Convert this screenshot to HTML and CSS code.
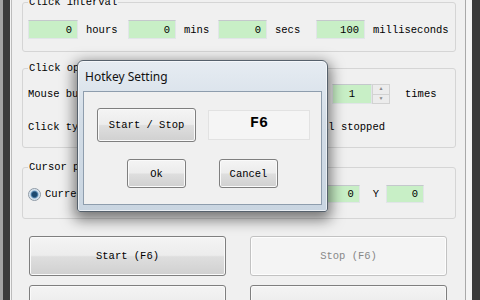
FILE: index.html
```html
<!DOCTYPE html>
<html lang="en">
<head>
  <meta charset="UTF-8" />
  <meta name="viewport" content="width=device-width, initial-scale=1.0" />
  <title>Auto Clicker - Hotkey Setting</title>
  <link rel="stylesheet" href="styles.css">
</head>
<body>
  <div class="desk">
    <div class="window">
      <div class="client">
        <fieldset class="group interval">
          <legend>Click interval</legend>
          <div class="interval-row">
            <input class="num" value="0" readonly><span class="unit">hours</span>
            <input class="num" value="0" readonly><span class="unit">mins</span>
            <input class="num" value="0" readonly><span class="unit">secs</span>
            <input class="num" value="100" readonly><span class="unit">milliseconds</span>
          </div>
        </fieldset>

        <div class="group-pair">
          <fieldset class="group options">
            <legend>Click options</legend>
            <div class="row">
              <span>Mouse button:</span>
              <span class="combo">Left</span>
            </div>
            <div class="row">
              <span>Click type:</span>
              <span class="combo">Single</span>
            </div>
          </fieldset>
          <fieldset class="group repeat">
            <legend>Click repeat</legend>
            <div class="row repeat-row">
              <label class="radio"><i></i>Repeat</label>
              <span class="spin">
                <input class="num center" value="1" readonly>
                <span class="arrows"><b>&#9650;</b><b>&#9660;</b></span>
              </span>
              <span class="unit wide">times</span>
            </div>
            <div class="row">
              <label class="radio checked"><i></i>Repeat until stopped</label>
            </div>
          </fieldset>
        </div>

        <fieldset class="group cursor">
          <legend>Cursor position</legend>
          <div class="row cursor-row">
            <label class="radio checked"><i></i>Current location</label>
            <div class="pick">
              <label class="radio"><i></i></label>
              <button class="btn small">Pick location</button>
              <span class="axis">X</span>
              <input class="num xy" value="0" readonly>
              <span class="axis y">Y</span>
              <input class="num xy" value="0" readonly>
            </div>
          </div>
        </fieldset>

        <div class="actions">
          <button class="btn">Start (F6)</button>
          <button class="btn" disabled>Stop (F6)</button>
          <button class="btn">Hotkey setting</button>
          <button class="btn">Record &amp; Playback</button>
        </div>
      </div>
    </div>
  </div>

  <div class="dialog">
    <div class="dlg-title">Hotkey Setting</div>
    <div class="dlg-client">
      <div class="dlg-row">
        <button class="btn dlg-key">Start / Stop</button>
        <div class="key-box">F6</div>
      </div>
      <div class="dlg-row dlg-bottom">
        <button class="btn dlg-btn">Ok</button>
        <button class="btn dlg-btn">Cancel</button>
      </div>
    </div>
  </div>
</body>
</html>
```

FILE: styles.css
```css
* {
  box-sizing: border-box;
  margin: 0;
  padding: 0;
}
body {
  width: 480px;
  height: 300px;
  overflow: hidden;
  position: relative;
  font: 10.5px "Liberation Mono", monospace;
  color: #000;
}
.desk {
  display: flex;
  height: 300px;
  background: #3b3b3b;
  border-left: 3px solid #a3a3a3;
  padding: 0 8px 0 7px;
}
.window {
  flex: 1;
  background: #f4f4f4;
  padding: 0 6px 0 1px;
}
.client {
  height: 100%;
  background: #f0f0f0;
  border-left: 1px solid #bcbcbc;
  border-right: 1px solid #a9a9a9;
  padding: 0 9px 0 10px;
  overflow: hidden;
}

/* group boxes */
.group {
  border: 1px solid #d5d5d5;
  border-radius: 3px;
  padding: 0 5px;
  min-width: 0;
}
.group legend {
  padding: 0 1px;
  line-height: 12px;
  height: 12px;
}
.interval {
  margin-top: -4px;
  padding-top: 12px;
  padding-bottom: 12px;
}
.interval-row {
  display: grid;
  grid-template-columns: 50px 50px 48px 42px 49px 49px 49px auto;
  align-items: center;
}
.unit {
  padding-left: 8px;
  white-space: nowrap;
}
.unit.wide {
  padding-left: 15px;
}
.num {
  width: 100%;
  height: 19px;
  font: inherit;
  color: #000;
  text-align: right;
  padding: 0 5px;
  background: #c8efc6;
  border: 1px solid #e1e5e8;
  border-top-color: #c4c8cc;
  outline: none;
}
.num.center {
  text-align: center;
  height: 20px;
}

.group-pair {
  display: grid;
  grid-template-columns: 207px 1fr;
  gap: 6px;
  margin-top: 10px;
}
.group-pair .group {
  padding-top: 10px;
  padding-bottom: 10px;
  display: flex;
  flex-direction: column;
  gap: 13px;
}
.row {
  display: flex;
  align-items: center;
  height: 20px;
  white-space: nowrap;
}
.combo {
  margin-left: auto;
  width: 80px;
  height: 20px;
  line-height: 18px;
  padding-left: 4px;
  background: #fff;
  border: 1px solid #abadb3;
}
.repeat {
  padding-left: 6px;
}
.repeat-row {
  display: grid;
  grid-template-columns: 90px 58px auto;
}
.spin {
  display: flex;
  height: 20px;
}
.spin .num {
  width: 40px;
}
.arrows {
  width: 18px;
  display: flex;
  flex-direction: column;
  border: 1px solid #d2d2d2;
  background: #ececec;
}
.arrows b {
  flex: 1;
  font-size: 5px;
  line-height: 9px;
  text-align: center;
  color: #8a8a8a;
  font-weight: normal;
}
.arrows b + b {
  border-top: 1px solid #d2d2d2;
}

/* radio buttons */
.radio {
  display: flex;
  align-items: center;
  gap: 4px;
}
.radio i {
  width: 13px;
  height: 13px;
  border-radius: 50%;
  border: 1px solid #8e9aa6;
  background: radial-gradient(circle, #f7f7f7 0 3px, #dde3ea 6px);
}
.radio.checked i {
  background: radial-gradient(circle, #1d4a70 0 2.2px, #4d7ea8 3.2px, #c9dbea 4.3px, #eef3f8 6px);
}

.cursor {
  margin-top: 13px;
  padding-top: 11px;
  padding-bottom: 14px;
}
.cursor-row {
  justify-content: space-between;
}
.pick {
  display: flex;
  align-items: center;
  margin-right: 26px;
}
.pick .btn.small {
  width: 92px;
  height: 22px;
  margin: 0 10px 0 6px;
}
.axis {
  margin-right: 7px;
}
.axis.y {
  margin: 0 7px 0 13px;
}
.num.xy {
  width: 38px;
  height: 18px;
}

/* push buttons */
.btn {
  font: inherit;
  color: #000;
  border: 1px solid #7f7f7f;
  border-radius: 3px;
  background: linear-gradient(#f4f4f4 0%, #ececec 48%, #dedede 52%, #d0d0d0 100%);
  box-shadow: inset 0 0 0 1px #fafafa;
}
.btn:disabled {
  color: #888;
  border-color: #c2c2c2;
  background: #f4f4f4;
  box-shadow: inset 0 0 0 1px #fdfdfd;
}
.actions {
  display: grid;
  grid-template-columns: 1fr 1fr;
  grid-auto-rows: 40px;
  column-gap: 24px;
  row-gap: 9px;
  margin-top: 17px;
  padding: 0 9px 0 7px;
}

/* hotkey dialog */
.dialog {
  position: absolute;
  left: 77px;
  top: 60px;
  width: 251px;
  height: 152px;
  border: 1px solid #56616c;
  border-radius: 6px 6px 3px 3px;
  background: linear-gradient(#e6ecf2, #d3dde7 40%, #c9d5e1);
  box-shadow: 0 5px 14px 3px rgba(0, 0, 0, 0.5), inset 0 0 0 1px rgba(255, 255, 255, 0.6);
  padding: 0 5px 6px;
  display: flex;
  flex-direction: column;
}
.dlg-title {
  height: 30px;
  padding-left: 2px;
  font: 12px/31px "Noto Sans", sans-serif;
  color: #111;
}
.dlg-client {
  flex: 1;
  background: #f0f0f0;
  border: 1px solid #8e9dad;
  padding: 16px 0 0 13px;
}
.dlg-row {
  display: flex;
  align-items: center;
  gap: 12px;
}
.dlg-key {
  width: 99px;
  height: 34px;
}
.key-box {
  width: 102px;
  height: 30px;
  background: #f5f5f5;
  border: 1px solid #e2e2e2;
  text-align: center;
  font-size: 15px;
  font-weight: bold;
  padding-top: 4px;
}
.dlg-bottom {
  margin-top: 17px;
  padding-left: 30px;
  gap: 33px;
}
.dlg-btn {
  width: 59px;
  height: 29px;
}
```
